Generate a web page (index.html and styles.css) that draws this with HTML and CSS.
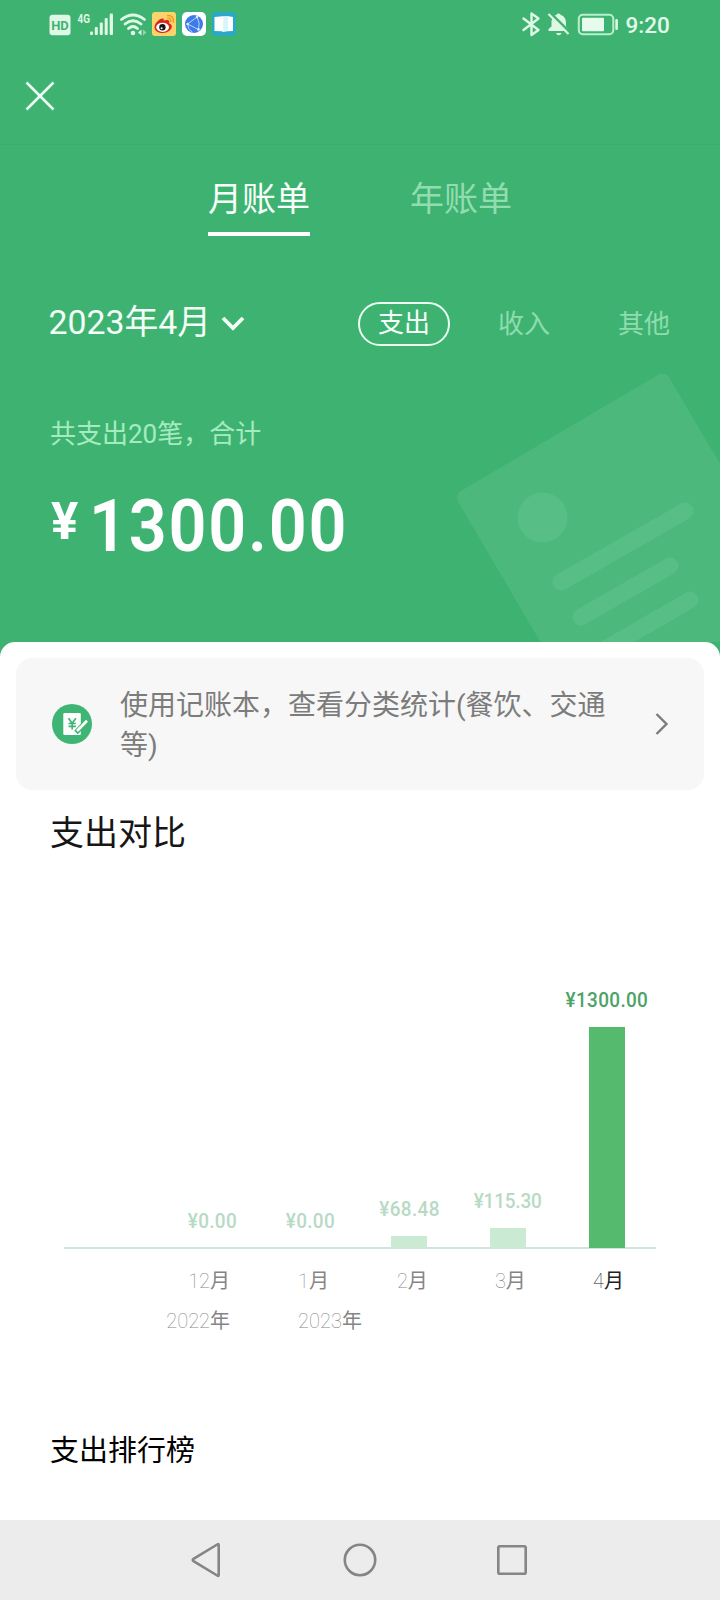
FILE: index.html
```html
<!DOCTYPE html>
<html lang="zh-CN">
<head>
<meta charset="utf-8">
<title>月账单</title>
<link rel="stylesheet" href="styles.css">
</head>
<body>
<div class="screen">
  <header class="hero">
    <svg class="watermark" viewBox="0 0 280 282" aria-hidden="true">
      <g transform="translate(14 135) rotate(-30.500)">
        <rect width="245" height="340" rx="8" fill="#fff" fill-opacity=".075"/>
      </g>
      <circle cx="102.500" cy="157.500" r="25" fill="#57bf85"/>
      <g stroke="#57bf85" stroke-width="17" stroke-linecap="round">
        <path d="M121 222L245 151"/><path d="M141 257L230 206"/><path d="M150 298L250 240"/>
      </g>
    </svg>

    <div class="status">
      <svg class="status-left" width="188" height="28" viewBox="0 0 188 28">
        <rect x="1.500" y="4.800" width="21" height="20.500" rx="3" fill="#dff8e6"/>
        <text class="hd" x="12" y="19.500" text-anchor="middle">HD</text>
        <text class="net" x="29.500" y="13" textLength="12.500" lengthAdjust="spacingAndGlyphs">4G</text>
        <g fill="#dff8e6">
          <rect x="42" y="21.500" width="3" height="3.500" rx="1"/><rect x="46.800" y="17" width="3" height="8" rx="1"/><rect x="51.800" y="12.500" width="3" height="12.500" rx="1"/><rect x="56.700" y="8" width="3" height="17" rx="1"/><rect x="61.700" y="3.500" width="3.300" height="21.500" rx="1"/>
        </g>
        <g fill="none" stroke="#dff8e6" stroke-width="2.800" stroke-linecap="round">
          <path d="M73.500 9.500Q85 .5 96.500 9.500"/><path d="M77 14Q85 7.500 93 14"/><path d="M80.500 18.500Q85 14.500 89.500 18.500"/>
        </g>
        <circle cx="85" cy="23" r="2.300" fill="#dff8e6"/>
        <path d="M93.500 19.500v6l-3.500-3z" fill="#dff8e6"/><path d="M95 19.500v6l3.500-3z" fill="#8fd6ac"/>
        <g transform="translate(104 2)">
          <rect width="24" height="24" rx="3" fill="#fbd36a"/>
          <path d="M2.500 15.500C2.500 11 8 6 11 6.500c1 .4 1 1.500.6 2.300 2-.9 5-1.200 5.600.4.300.8 0 1.500-.2 2.100 1.600.5 2.800 1.500 2.800 3.300C19.800 18 15.500 21 11 21s-8.500-2-8.500-5.500z" fill="#d9251c"/>
          <ellipse cx="10.600" cy="15.300" rx="6.400" ry="4.600" fill="#fff"/><circle cx="10.400" cy="15.300" r="3.200" fill="#1b1414"/><circle cx="9.600" cy="16.200" r="1" fill="#fff"/>
          <path d="M15.800 6.200c2-.3 3.600 1.300 3 3.300M15.500 3.600c4-.6 6.800 2.400 5.800 6.500" fill="none" stroke="#f39a1d" stroke-width="1.400" stroke-linecap="round"/>
        </g>
        <g transform="translate(134 2)">
          <rect width="24" height="24" rx="5" fill="#fff"/><circle cx="12" cy="12" r="9" fill="#3c7be8"/>
          <path d="M15 5L5.600 12 16.500 17.500M15 5q3.500 6 1.500 12.500M5.600 12q0 5 5 8.500" fill="none" stroke="#b9d6ff" stroke-width="1"/>
          <g fill="#e6f0ff"><circle cx="15" cy="5" r="1.200"/><circle cx="5.600" cy="12" r="1.300"/><circle cx="16.500" cy="17.500" r="1.300"/></g>
        </g>
        <g transform="translate(164 2)">
          <rect width="24" height="24" rx="4" fill="#2aa9c6"/>
          <path d="M2.500 5l8-.7h6l4.500.7v14l-6 .2-4 .8-1-.8-7.500-.2z" fill="#fff"/><path d="M11.200 5.500L16 4v14l-4.800 1.800z" fill="#d9f5fb"/>
        </g>
      </svg>
      <svg class="status-right" width="150" height="28" viewBox="0 0 150 28">
        <path d="M3.500 8.500L18.500 20l-7 5V3.500l7 5L3.500 20" fill="none" stroke="#dff8e6" stroke-width="2.400" stroke-linejoin="round" stroke-linecap="round"/>
        <path d="M28.500 21V19l3-2.500v-4c0-4 2-7 5-7.500V4.300q2-1.800 4 0V5c3 .5 5.500 3.500 5.500 7.500v4l2 2.500v2zM36 23h5.500q-.8 2.300-2.700 2.300T36 23z" fill="#dff8e6"/>
        <path d="M30 2.500L50.500 23" stroke="#3eb371" stroke-width="2.500"/><path d="M28.500 4L48.500 24" stroke="#dff8e6" stroke-width="2.200"/>
        <rect x="58.800" y="4.800" width="34.500" height="19.500" rx="4" fill="none" stroke="#b9efcc" stroke-width="2"/>
        <rect x="62" y="7.800" width="22" height="13.500" rx="1" fill="#e6fbec"/>
        <rect x="95.300" y="9" width="2.600" height="11" rx="1.200" fill="#dff8e6"/>
        <text class="clock" x="105.500" y="22.500">9:20</text>
      </svg>
    </div>

    <div class="toolbar">
      <svg width="30" height="30" viewBox="0 0 30 30"><path d="M1.500 1.500L28.500 28.500M28.500 1.500L1.500 28.500" stroke="#ecfff2" stroke-width="2.600"/></svg>
    </div>

    <nav class="tabs">
      <span class="tab tab-on">月账单</span>
      <span class="tab">年账单</span>
    </nav>

    <div class="filters">
      <div class="month">2023年4月
        <svg width="24" height="18" viewBox="0 0 24 18"><path d="M2 4L12 14 22 4" fill="none" stroke="#f4fff7" stroke-width="3.800"/></svg>
      </div>
      <div class="kinds">
        <span class="kind kind-on">支出</span>
        <span class="kind">收入</span>
        <span class="kind">其他</span>
      </div>
    </div>

    <p class="summary">共支出20笔，合计</p>
    <div class="amount"><span class="yen">¥</span><span class="sum">1300.00</span></div>
  </header>

  <main class="sheet">
    <div class="promo">
      <svg class="promo-icon" width="40" height="40" viewBox="0 0 40 40">
        <circle cx="20" cy="20" r="20" fill="#3eb575"/>
        <rect x="11.300" y="9" width="17.500" height="22" rx="1" fill="#fff"/>
        <path d="M16.500 14.300l3.700 5 3.700-5M20.200 19.300v6.200M16.500 19.500h7.400M16.500 22.300h7.400" fill="none" stroke="#3eb575" stroke-width="1.700"/>
        <path d="M24 28.500L33 19" stroke="#3eb575" stroke-width="5"/><path d="M25 27L35 16.800" stroke="#fff" stroke-width="2.700"/>
      </svg>
      <p class="promo-text">使用记账本，查看分类统计(餐饮、交通等)</p>
      <svg class="promo-arrow" width="14" height="24" viewBox="0 0 14 24"><path d="M1.500 2L11.500 12 1.500 22" fill="none" stroke="#7c7c7c" stroke-width="2.400"/></svg>
    </div>

    <h2 class="title">支出对比</h2>

    <section class="chart">
      <div class="bars">
        <div class="col"></div>
        <div class="col"><span class="value zero">¥0.00</span></div>
        <div class="col"><span class="value zero">¥0.00</span></div>
        <div class="col"><span class="value">¥68.48</span><i class="bar" style="height:12px"></i></div>
        <div class="col"><span class="value tight">¥115.30</span><i class="bar" style="height:20px"></i></div>
        <div class="col now"><span class="value">¥1300.00</span><i class="bar" style="height:221px"></i></div>
      </div>
      <div class="axis">
        <div class="tick"></div>
        <div class="tick end"><span>12<b>月</b></span><span>2022<b>年</b></span></div>
        <div class="tick start first"><span>1<b>月</b></span><span>2023<b>年</b></span></div>
        <div class="tick start"><span>2<b>月</b></span></div>
        <div class="tick start"><span>3<b>月</b></span></div>
        <div class="tick start now"><span>4<b>月</b></span></div>
      </div>
    </section>

    <h2 class="title rank">支出排行榜</h2>
  </main>

  <footer class="navbar">
    <svg width="36" height="36" viewBox="0 0 36 36"><path d="M28.700 3.200V32.800Q28.700 34.500 27.200 33.500L3.500 19.200Q2 18 3.500 16.800L27.200 2.500Q28.700 1.500 28.700 3.200z"/></svg>
    <svg width="36" height="36" viewBox="0 0 36 36"><circle cx="18" cy="18" r="15.200"/></svg>
    <svg width="36" height="36" viewBox="0 0 36 36"><rect x="4.300" y="4.300" width="27.400" height="27.400" rx="1.500"/></svg>
  </footer>
</div>
</body>
</html>
```
FILE: styles.css
```css
* { box-sizing: border-box; }
body {
  margin: 0;
  font-family: Roboto, "Noto Sans CJK SC", sans-serif;
  background: #fff;
}
p, h2 { margin: 0; font-weight: 400; }
svg { display: block; flex: none; }

.screen { width: 720px; height: 1600px; display: flex; flex-direction: column; overflow: hidden; }

.hero { position: relative; height: 660px; flex: none; background: #3eb371; color: #f4fff7; }
.hero > * { position: relative; }
.hero > .watermark { position: absolute; left: 440px; top: 360px; width: 280px; height: 282px; }

.status { display: flex; justify-content: space-between; height: 48px; padding: 10px 48px 0; }
.status-right { margin-right: 2px; }
.hd { font: 700 13px Roboto, sans-serif; fill: #3eb371; }
.net { font: 700 13px Roboto, sans-serif; fill: #dff8e6; }
.clock { font: 500 22.5px Roboto, sans-serif; fill: #e2faea; }

.toolbar { height: 97px; padding: 33px 25px 0; border-bottom: 1px solid #3bae6d; }

.tabs { display: flex; justify-content: center; gap: 100px; height: 91px; padding: 27px 0 0; }
.tab { height: 64px; padding-top: 2px; font-size: 34px; line-height: 50px; color: #93dcb0; }
.tab-on { color: #f6fff9; border-bottom: 4px solid #fff; }

.filters { display: flex; justify-content: space-between; align-items: center; height: 44px; margin-top: 66px; padding: 0 50px 0 48.5px; }
.month { display: flex; align-items: center; gap: 10px; margin-top: -3px; font-size: 33.8px; line-height: 44px; }
.kinds { display: flex; align-items: center; font-size: 26px; gap: 68px; color: #8fdcae; }
.kind { line-height: 40px; }
.kind-on { width: 92px; height: 44px; margin-right: -20px; border: 2px solid #eafff1; border-radius: 22px; text-align: center; color: #f6fff9; line-height: 39px; }

.summary { margin-top: 68px; padding-left: 50px; font-size: 26px; line-height: 40px; color: #a6ebc0; }
.amount { display: flex; align-items: flex-start; margin-top: 30px; padding-left: 51px; height: 90px; color: #fff; }
.yen { width: 38px; font-size: 51px; font-weight: 700; line-height: 75px; }
.sum { font-size: 73px; font-weight: 600; line-height: 85px; letter-spacing: 1.9px; transform: scaleX(.912); transform-origin: 0 50%; }

.sheet { position: relative; flex: 1; margin-top: -18px; padding: 16px 16px 0; background: #fff; border-radius: 15px 15px 0 0; }
.promo { display: flex; align-items: center; height: 132px; padding: 0 35px 0 36px; background: #f7f7f7; border-radius: 16px; }
.promo-text { flex: 1; margin: 0 36px 0 28px; padding-top: 4px; font-size: 28px; line-height: 40px; color: #7c7c7c; }
.title { margin-top: 18px; padding-left: 34px; font-size: 34px; line-height: 50px; color: #161616; }

.chart { width: 592px; margin: 129px 0 0 48px; }
.bars { display: grid; grid-template-columns: repeat(6, 1fr); height: 262px; border-bottom: 2px solid #d3e4dc; }
.col { display: flex; flex-direction: column; align-items: center; justify-content: flex-end; }
.value { margin-bottom: 15px; font-size: 21px; font-weight: 500; line-height: 24px; letter-spacing: .4px; color: #b7dac5; transform: scaleX(.9); }
.value.zero { margin-bottom: 14px; }
.value.tight { letter-spacing: -.2px; }
.bar { width: 36px; margin-bottom: -1px; background: #caead3; }
.now .value { color: #4da267; }
.now .bar { background: #55b96e; }
.axis { display: grid; grid-template-columns: repeat(6, 1fr); padding-top: 18px; font-size: 20px; line-height: 28px; font-weight: 100; color: #858585; }
.axis b { font-weight: 400; }
.tick { display: flex; flex-direction: column; gap: 12px; white-space: nowrap; }
.end { align-items: flex-end; padding-right: 30px; }
.start { padding-left: 35px; }
.start.first { padding-left: 38px; }
.tick.now { color: #222; }

.rank { margin-top: 94px; font-size: 29px; line-height: 44px; color: #000; }

.navbar { position: relative; display: flex; justify-content: center; align-items: center; gap: 116px; height: 80px; flex: none; background: #ececec; }
.navbar svg { fill: none; stroke: #858585; stroke-width: 2.6; }
```
